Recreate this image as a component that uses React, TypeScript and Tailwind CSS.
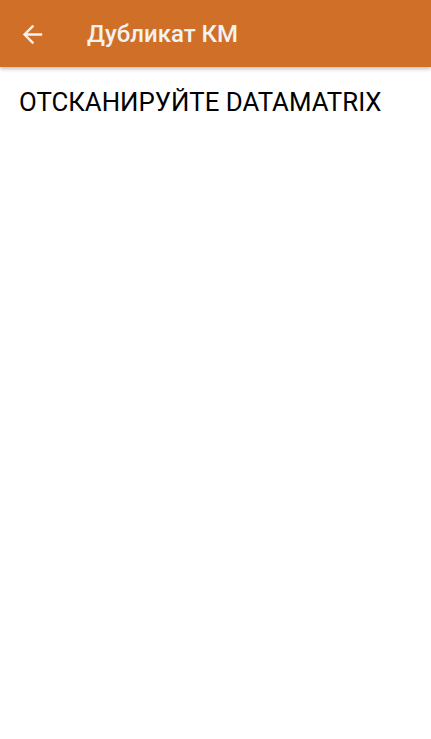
import React from "react";

export default function App() {
  return (
    <div className="w-[431px] h-[739px] bg-white flex flex-col" style={{ fontFamily: "Roboto, 'Noto Sans', sans-serif" }}>
      <div className="h-[67px] bg-[#d07028] flex items-center shadow-[0_2px_4px_rgba(0,0,0,0.25)] relative z-10">
        <div className="w-[87px] flex items-center pl-[18px] pt-[1px]">
          <svg width="29" height="29" viewBox="0 0 24 24" fill="none">
            <path d="M20 11H7.83l5.59-5.59L12 4l-8 8 8 8 1.41-1.41L7.83 13H20v-2z" fill="#f2f2f2" />
          </svg>
        </div>
        <div className="text-[24px] font-medium text-[#f2f2f2] mt-[1px]">Дубликат КМ</div>
      </div>
      <div className="px-[19px] pt-[20px] text-[25.8px] text-black leading-[30px]">ОТСКАНИРУЙТЕ DATAMATRIX</div>
    </div>
  );
}
